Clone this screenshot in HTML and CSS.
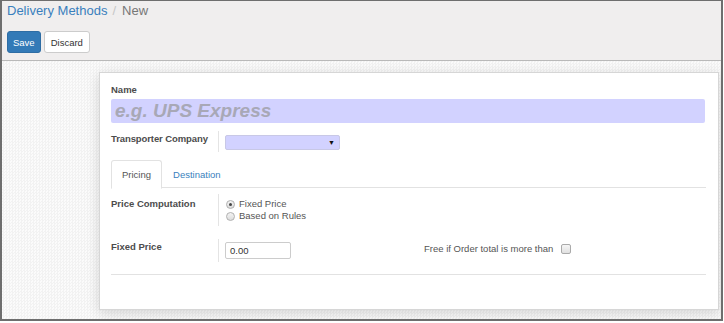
FILE: index.html
```html
<!DOCTYPE html>
<html>
<head>
<meta charset="utf-8">
<title>Delivery Methods - New</title>
<link rel="stylesheet" href="styles.css">
</head>
<body>
<div class="frame">
  <div class="control-panel">
    <ol class="breadcrumb">
      <li class="crumb-link">Delivery Methods</li>
      <li class="crumb-sep">/</li>
      <li class="crumb-active">New</li>
    </ol>
    <div class="buttons">
      <button class="btn btn-primary">Save</button>
      <button class="btn btn-default">Discard</button>
    </div>
  </div>
  <div class="view-manager">
    <div class="sheet">
      <div class="name-label">Name</div>
      <input class="name-input" type="text" placeholder="e.g. UPS Express">
      <div class="group-row row-company">
        <div class="cell-label">Transporter Company</div>
        <div class="cell-field">
          <div class="select"><span class="caret">&#9660;</span></div>
        </div>
      </div>
      <ul class="tabs">
        <li class="tab active">Pricing</li>
        <li class="tab">Destination</li>
      </ul>
      <div class="group-row row-compute">
        <div class="cell-label">Price Computation</div>
        <div class="cell-field">
          <div class="radio"><span class="dot checked"></span>Fixed Price</div>
          <div class="radio"><span class="dot"></span>Based on Rules</div>
        </div>
      </div>
      <div class="group-row row-price">
        <div class="cell-label">Fixed Price</div>
        <div class="cell-field">
          <div class="price-input">0.00</div>
        </div>
        <div class="free-label">Free if Order total is more than <span class="checkbox"></span></div>
      </div>
      <div class="sheet-line"></div>
    </div>
  </div>
</div>
</body>
</html>
```
FILE: styles.css
```css
*{
  margin:0;
  padding:0;
  box-sizing:border-box;
}
body{
  background:#fff;
  font-family:"Liberation Sans", Arial, sans-serif;
  font-size:9.5px;
  color:#4c4c4c;
}
.frame{
  width:723px;
  height:321px;
  border:2px solid #6e6e6e;
  border-top-width:1px;
  display:flex;
  flex-direction:column;
  overflow:hidden;
}
.control-panel{
  background:#f0eeee;
  border-bottom:1px solid #b9b9b9;
  height:60px;
  flex:none;
  padding:0 5px;
}
.breadcrumb{
  list-style:none;
  display:flex;
  font-size:13px;
  line-height:20px;
}
.crumb-link{
  color:#3a7fbd;
}
.crumb-sep{
  color:#c6c6c6;
  padding:0 6px 0 5px;
}
.crumb-active{
  color:#777;
}
.buttons{
  display:flex;
  gap:3px;
  margin-top:10px;
}
.btn{
  height:22px;
  padding:0 6px;
  font-family:"Liberation Sans", Arial, sans-serif;
  font-size:9.5px;
  border-radius:3px;
  border:1px solid #ccc;
}
.btn-primary{
  background:#337ab7;
  border-color:#2e6da4;
  color:#fff;
  padding:0 5px;
}
.btn-default{
  background:#fff;
  color:#333;
}
.view-manager{
  flex:1;
  background-color:#f7f7f7;
  background-image:repeating-conic-gradient(#f2f2f2 0 25%, #fbfbfb 0 50%);
  background-size:3px 3px;
  padding:11px 2px 9px 97px;
}
.sheet{
  background:#fff;
  height:238px;
  border:1px solid #d6d6d6;
  box-shadow:0 3px 12px rgba(0,0,0,.15);
  padding:10px 12px 0 11px;
  display:flex;
  flex-direction:column;
}
.name-label{
  font-weight:bold;
  line-height:14px;
  color:#4c4c4c;
}
.name-input{
  display:block;
  width:594px;
  height:24px;
  margin-top:2px;
  border:none;
  border-radius:2px;
  background:#d2d2ff;
  padding:0 4px;
  font-family:"Liberation Sans", Arial, sans-serif;
  font-size:19px;
  font-weight:bold;
  font-style:italic;
}
.name-input::placeholder{
  color:#a8a8b6;
}
.group-row{
  display:grid;
  grid-template-columns:108px 205px auto;
  align-items:start;
  flex:none;
}
.cell-label{
  font-weight:bold;
  border-right:1px solid #e4e4e4;
  line-height:14px;
  align-self:stretch;
  padding-top:3px;
}
.cell-field{
  padding-left:6px;
}
.row-company{
  margin-top:8px;
  height:21px;
}
.row-company .cell-label{
  padding-top:1px;
  letter-spacing:-0.1px;
}
.select{
  margin-top:4px;
  width:115px;
  height:15px;
  background:#d2d2ff;
  border:1px solid #c8c8e6;
  border-radius:2px;
  display:flex;
  justify-content:flex-end;
  align-items:center;
  padding-right:4px;
}
.caret{
  font-size:7px;
  color:#111;
}
.tabs{
  list-style:none;
  display:flex;
  margin-top:8px;
  border-bottom:1px solid #e2e2e2;
  height:28px;
  flex:none;
}
.tab{
  padding:0 10px;
  line-height:27px;
  color:#3a7fbd;
  border:1px solid transparent;
  border-radius:3px 3px 0 0;
}
.tab.active{
  color:#555;
  background:#fff;
  border-color:#e2e2e2;
  border-bottom-color:#fff;
  height:29px;
}
.row-compute{
  margin-top:6px;
  height:32px;
}
.row-compute .cell-field{
  padding-top:4px;
}
.radio{
  display:flex;
  align-items:center;
  line-height:12px;
  color:#555;
}
.dot{
  width:9px;
  height:9px;
  border-radius:50%;
  border:1px solid #b0b0b0;
  background:linear-gradient(#f4f4f4, #dcdcdc);
  margin:0 4px 0 1px;
  display:flex;
  align-items:center;
  justify-content:center;
}
.dot.checked::after{
  content:"";
  width:3px;
  height:3px;
  border-radius:50%;
  background:#444;
}
.row-price{
  margin-top:13px;
  height:23px;
}
.row-price .cell-label{
  padding-top:1px;
}
.price-input{
  margin-top:3px;
  width:66px;
  height:17px;
  border:1px solid #ccc;
  border-radius:2px;
  padding-left:4px;
  line-height:15px;
  color:#333;
}
.free-label{
  padding-top:3px;
  color:#555;
  display:flex;
  align-items:center;
  line-height:14px;
}
.checkbox{
  display:inline-block;
  width:10px;
  height:10px;
  border:1px solid #aaa;
  border-radius:2px;
  background:linear-gradient(#f6f6f6, #e0e0e0);
  margin-left:8px;
}
.sheet-line{
  margin-top:12px;
  border-top:1px solid #e2e2e2;
  flex:none;
}
```
